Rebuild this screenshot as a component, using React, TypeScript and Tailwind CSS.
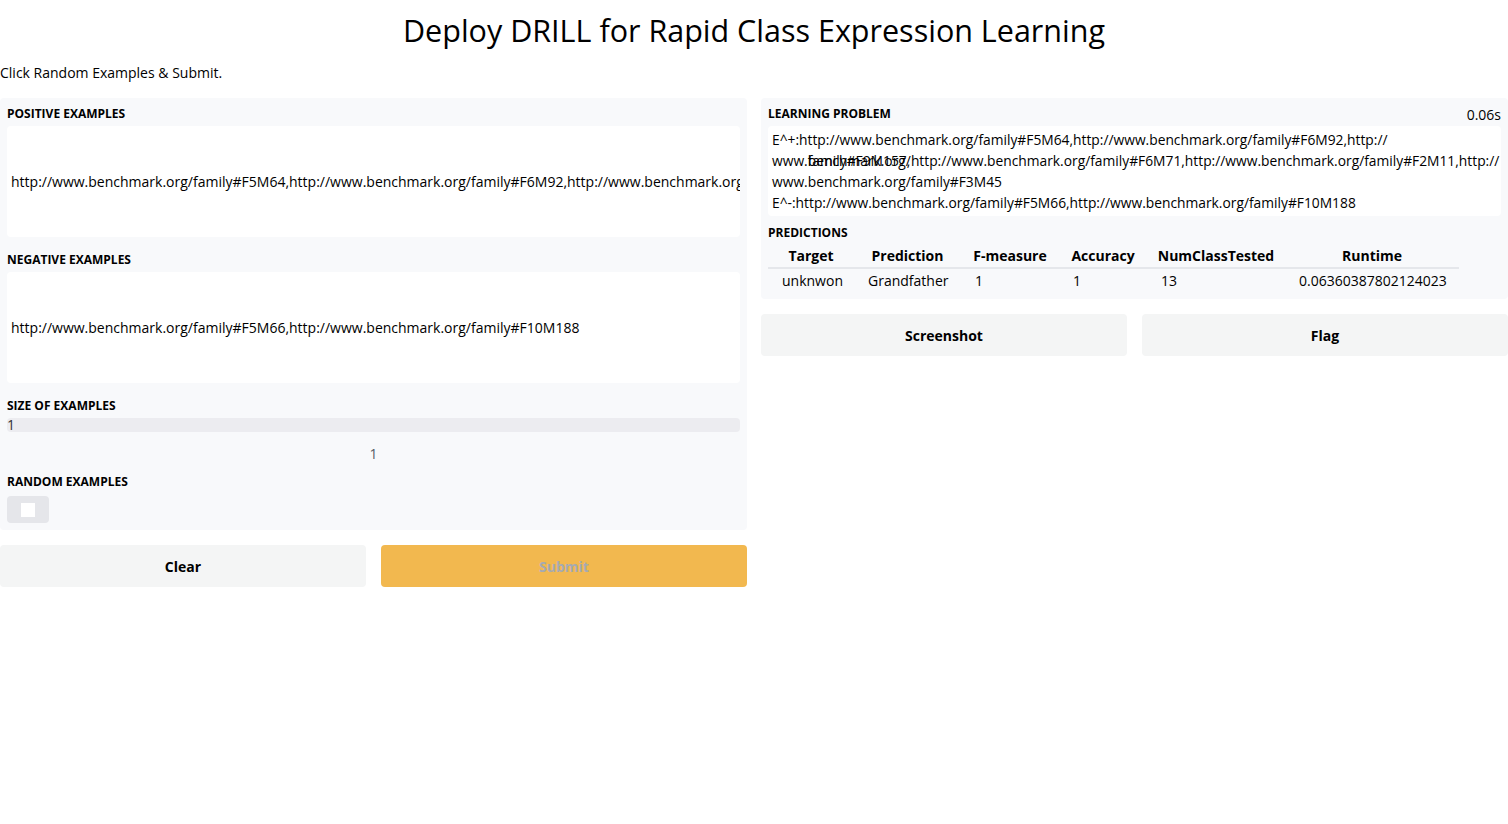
import React from "react";

const font = { fontFamily: '"Open Sans", "Noto Sans", sans-serif' };

function Label({ children }: { children: React.ReactNode }) {
  return <div className="text-[12px] font-bold uppercase leading-[16px] text-black">{children}</div>;
}

export default function App() {
  const headers = [
    { t: "Target", w: "w-[86px]" },
    { t: "Prediction", w: "w-[107px]" },
    { t: "F-measure", w: "w-[98px]" },
    { t: "Accuracy", w: "w-[88px]" },
    { t: "NumClassTested", w: "w-[138px]" },
    { t: "Runtime", w: "w-[174px]" },
  ];
  const values = ["unknwon", "Grandfather", "1", "1", "13", "0.06360387802124023"];
  return (
    <div className="w-[1508px] h-[824px] bg-white text-black text-[14px] overflow-hidden" style={font}>
      <h1 className="text-center text-[30.5px] leading-[40px] pt-[10px] font-normal">
        Deploy DRILL for Rapid Class Expression Learning
      </h1>
      <p className="mt-[13px] text-[14px] leading-[20px]">Click Random Examples &amp; Submit.</p>
      <div className="flex gap-[14px] mt-[15px]">
        {/* Left column */}
        <div className="w-[747px] flex-none flex flex-col gap-[15px]">
          <div className="bg-[#f8f9fb] rounded-[4px] px-[7px] pt-[8px] pb-[7px] flex flex-col">
            <Label>Positive Examples</Label>
            <div className="mt-[4px] bg-white rounded-[4px] h-[111px] flex items-center px-[4px] overflow-hidden whitespace-nowrap">
              http://www.benchmark.org/family#F5M64,http://www.benchmark.org/family#F6M92,http://www.benchmark.org/family#F9M157,http://www.benchmark.org/family#F6M71
            </div>
            <div className="mt-[15px]"><Label>Negative Examples</Label></div>
            <div className="mt-[4px] bg-white rounded-[4px] h-[111px] flex items-center px-[4px] overflow-hidden whitespace-nowrap">
              http://www.benchmark.org/family#F5M66,http://www.benchmark.org/family#F10M188
            </div>
            <div className="mt-[15px]"><Label>Size of Examples</Label></div>
            <div className="mt-[4px] bg-[#ececf0] rounded-[4px] h-[14px] flex items-center text-[#333] leading-[14px]">1</div>
            <div className="text-center text-[#555a66] mt-[12px] leading-[20px]">1</div>
            <div className="mt-[10px]"><Label>Random Examples</Label></div>
            <div className="mt-[6px] w-[42px] h-[27px] bg-[#e5e6ea] rounded-[4px] flex items-center justify-center">
              <div className="w-[14px] h-[14px] bg-white" />
            </div>
          </div>
          <div className="flex gap-[15px]">
            <button className="flex-1 h-[42px] bg-[#f4f5f5] rounded-[4px] font-bold text-[14px] text-black">Clear</button>
            <button className="flex-1 h-[42px] bg-[#f2b84f] rounded-[4px] font-bold text-[14px] text-[#a6aab3]">Submit</button>
          </div>
        </div>
        {/* Right column */}
        <div className="w-[747px] flex-none flex flex-col gap-[15px]">
          <div className="bg-[#f8f9fb] rounded-[4px] px-[7px] pt-[8px] pb-[7px] flex flex-col">
            <div className="flex justify-between items-start h-[16px]">
              <Label>Learning Problem</Label>
              <div className="text-[14px] leading-[18px]">0.06s</div>
            </div>
            <div className="mt-[4px] bg-white rounded-[4px] px-[4px] py-[3px] leading-[21px] text-[13.8px] whitespace-nowrap overflow-hidden">
              <div>E^+:http://www.benchmark.org/family#F5M64,http://www.benchmark.org/family#F6M92,http://</div>
              <div>
                www.
                <span className="inline-grid align-top">
                  <span className="col-start-1 row-start-1">benchmark.org/</span>
                  <span className="col-start-1 row-start-1">family#F9M157,</span>
                </span>
                http://www.benchmark.org/family#F6M71,http://www.benchmark.org/family#F2M11,http://
              </div>
              <div>www.benchmark.org/family#F3M45</div>
              <div>E^-:http://www.benchmark.org/family#F5M66,http://www.benchmark.org/family#F10M188</div>
            </div>
            <div className="mt-[9px]"><Label>Predictions</Label></div>
            <table className="mt-[4px] border-collapse text-[14px] table-fixed w-[691px]">
              <colgroup>
                {headers.map((h) => (
                  <col key={h.t} className={h.w} />
                ))}
              </colgroup>
              <thead>
                <tr className="border-b-2 border-[#e5e7eb]">
                  {headers.map((h) => (
                    <th key={h.t} className="px-[8px] py-[2px] text-center font-bold leading-[18px] whitespace-nowrap">{h.t}</th>
                  ))}
                </tr>
              </thead>
              <tbody>
                <tr>
                  {values.map((v, i) => (
                    <td key={i} className="pl-[14px] pr-0 pt-[3px] pb-[2px] text-left leading-[18px] whitespace-nowrap">{v}</td>
                  ))}
                </tr>
              </tbody>
            </table>
          </div>
          <div className="flex gap-[15px]">
            <button className="flex-1 h-[42px] bg-[#f4f5f5] rounded-[4px] font-bold text-[14px] text-black">Screenshot</button>
            <button className="flex-1 h-[42px] bg-[#f4f5f5] rounded-[4px] font-bold text-[14px] text-black">Flag</button>
          </div>
        </div>
      </div>
    </div>
  );
}
